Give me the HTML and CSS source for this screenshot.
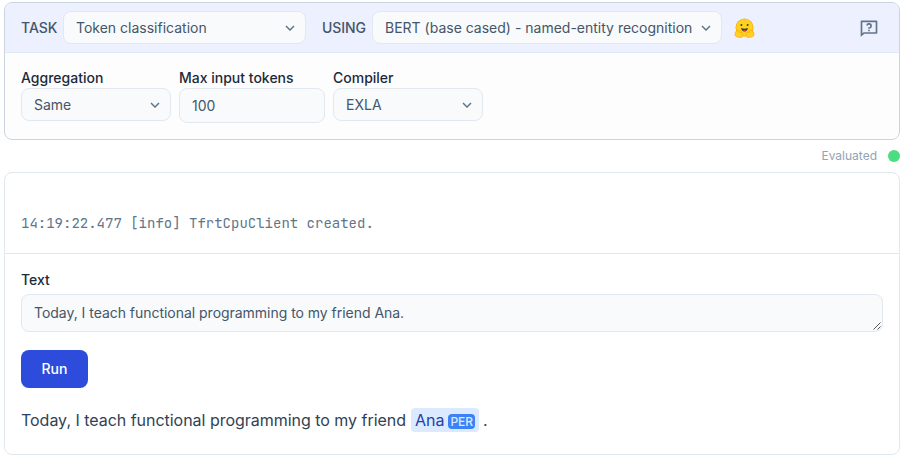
FILE: index.html
```
<!DOCTYPE html>
<html lang="en">
<head>
<meta charset="utf-8">
<title>Token classification</title>
<link rel="stylesheet" href="styles.css">
</head>
<body>
<main class="page">
  <section class="config">
    <header class="config-header">
      <span class="caption">TASK</span>
      <div class="select select-task">Token classification
        <svg class="chevron" viewBox="0 0 10 6"><path d="M1 1l4 4 4-4"/></svg>
      </div>
      <span class="caption caption-using">USING</span>
      <div class="select select-model">BERT (base cased) - named-entity recognition
        <svg class="chevron" viewBox="0 0 10 6"><path d="M1 1l4 4 4-4"/></svg>
      </div>
      <svg class="hugging" viewBox="0 0 42 40">
        <circle cx="21" cy="19" r="18" fill="#ffad0b"/>
        <circle cx="21" cy="19" r="16.5" fill="#ffd21e"/>
        <circle cx="14.7" cy="14.2" r="2" fill="#3a3b45"/>
        <circle cx="27.3" cy="14.2" r="2" fill="#3a3b45"/>
        <path d="M14.5 19.5Q21 23 27.5 19.5Q27 27 21 27Q15 27 14.5 19.5Z" fill="#3a3b45"/>
        <path d="M17.5 25.5Q21 22.5 24.5 25.5Q23 27 21 27Q19 27 17.5 25.5Z" fill="#f94040"/>
        <g class="hand"><path d="M16 38.5Q8 40 3 36Q1 34 2.5 31.5Q1 28.500 4 28Q4 24.500 6.500 26Q7 22.500 9.500 25L13 30Q14 25 16 28L17 32Q19 36 16 38.500Z"/><path d="M26 38.500Q34 40 39 36Q41 34 39.500 31.500Q41 28.500 38 28Q38 24.500 35.500 26Q35 22.500 32.500 25L29 30Q28 25 26 28L25 32Q23 36 26 38.500Z"/></g>
      </svg>
      <svg class="help" viewBox="0 0 24 24"><path d="M5.763 17H20V5H4v13.385L5.763 17zm.692 2L2 22.5V4a1 1 0 0 1 1-1h18a1 1 0 0 1 1 1v14a1 1 0 0 1-1 1H6.455zM11 14h2v2h-2v-2zM8.567 8.813A3.501 3.501 0 1 1 12 13h-1v-2h1a1.5 1.5 0 1 0-1.471-1.794l-1.962-.393z"/></svg>
    </header>
    <div class="fields">
      <div class="field">
        <span class="label">Aggregation</span>
        <div class="select">Same
          <svg class="chevron" viewBox="0 0 10 6"><path d="M1 1l4 4 4-4"/></svg>
        </div>
      </div>
      <div class="field field-number">
        <span class="label">Max input tokens</span>
        <div class="number">100</div>
      </div>
      <div class="field">
        <span class="label">Compiler</span>
        <div class="select">EXLA
          <svg class="chevron" viewBox="0 0 10 6"><path d="M1 1l4 4 4-4"/></svg>
        </div>
      </div>
    </div>
  </section>
  <div class="status"><span>Evaluated</span><i class="dot"></i></div>
  <section class="output">
    <pre class="log">14:19:22.477 [info] TfrtCpuClient created.</pre>
    <div class="result">
      <span class="label">Text</span>
      <div class="textarea">Today, I teach functional programming to my friend Ana.
        <svg class="grip" viewBox="0 0 8 8"><path d="M.5 7.5l7-7M4.5 7.5l3-3"/></svg>
      </div>
      <button class="run">Run</button>
      <p class="sentence"><span>Today, I teach functional programming to my friend</span><span class="entity">Ana<b class="tag">PER</b></span><span>.</span></p>
    </div>
  </section>
</main>
</body>
</html>
```
FILE: styles.css
```
* { box-sizing: border-box; }

body {
  margin: 0;
  background: #fff;
  font: 14px/20px Inter, "Liberation Sans", sans-serif;
  color: #445668;
}

.page { padding: 2px 10px 0 4px; }

.config {
  height: 138px;
  border: 1px solid #cad5e0;
  border-radius: 8px;
  background: #fdfdfd;
  overflow: hidden;
}

.config-header {
  display: flex;
  align-items: center;
  height: 50px;
  padding: 0 20px 0 16px;
  border-bottom: 1px solid #e1e8f0;
  background: #ecf0ff;
}

.caption { width: 42px; font-weight: 500; letter-spacing: -0.05px; white-space: nowrap; }
.caption-using { width: 50px; margin-left: 16px; }

.select {
  display: flex;
  align-items: center;
  justify-content: space-between;
  height: 33px;
  padding: 0 10px 0 12px;
  border: 1px solid #e1e8f0;
  border-radius: 8px;
  background: #f8fafc;
  white-space: nowrap;
}

.select-task { width: 243px; }
.select-model { width: 350px; }

.chevron {
  width: 10px;
  height: 6px;
  fill: none;
  stroke: #61758a;
  stroke-width: 1.5;
}

.hugging { width: 21px; height: 20px; margin-left: 12px; }
.hand { fill: #ffd21e; stroke: #ffa20b; stroke-width: 1.3; }
.help { width: 20px; height: 20px; margin-left: auto; fill: #61758a; }

.fields { display: flex; gap: 8px; padding: 15px 16px; }
.field { width: 150px; }
.field-number { width: 146px; }

.label { display: block; font-weight: 500; color: #1c2a3a; }

.number {
  height: 35px;
  padding: 7px 12px;
  border: 1px solid #e1e8f0;
  border-radius: 8px;
  background: #f8fafc;
}

.status {
  display: flex;
  align-items: center;
  justify-content: flex-end;
  gap: 11px;
  height: 32px;
  font-size: 12px;
  color: #91a4b7;
}

.dot { width: 12px; height: 12px; border-radius: 50%; background: #4ade80; }

.output {
  height: 283px;
  border: 1px solid #e1e8f0;
  border-radius: 8px;
}

.log {
  height: 81px;
  margin: 0;
  padding: 40px 16px 0;
  border-bottom: 1px solid #e1e8f0;
  font: 14px/20px "JetBrains Mono", "DejaVu Sans Mono", monospace;
  color: #61758a;
}

.result { padding: 16px; }

.textarea {
  display: flex;
  justify-content: space-between;
  align-items: flex-end;
  height: 38px;
  margin-top: 4px;
  padding: 0 1px 1px 12px;
  border: 1px solid #e1e8f0;
  border-radius: 8px;
  background: #f8fafc;
  line-height: 34px;
  letter-spacing: -0.03px;
}

.grip { width: 8px; height: 8px; fill: none; stroke: #555; stroke-width: 1; }

.run {
  display: block;
  width: 67px;
  height: 38px;
  margin-top: 18px;
  padding: 0;
  border: 0;
  border-radius: 8px;
  background: #2d4cdb;
  font: 500 14px/20px Inter, sans-serif;
  color: #fff;
}

.sentence {
  display: flex;
  align-items: center;
  margin: 20px 0 0;
  font-size: 16px;
  line-height: 24px;
  letter-spacing: -0.025px;
  color: #304254;
}

.entity {
  display: flex;
  align-items: center;
  gap: 4px;
  width: 68px;
  height: 24px;
  margin: 0 4px 0 5px;
  padding: 0 4px;
  border-radius: 4px;
  background: #dbeafe;
  color: #1e40af;
}

.tag {
  width: 27px;
  height: 15px;
  margin-top: 3px;
  border-radius: 4px;
  background: #3b82f6;
  font-size: 12px;
  font-weight: 500;
  line-height: 15px;
  text-align: center;
  color: #dbeafe;
}
```
